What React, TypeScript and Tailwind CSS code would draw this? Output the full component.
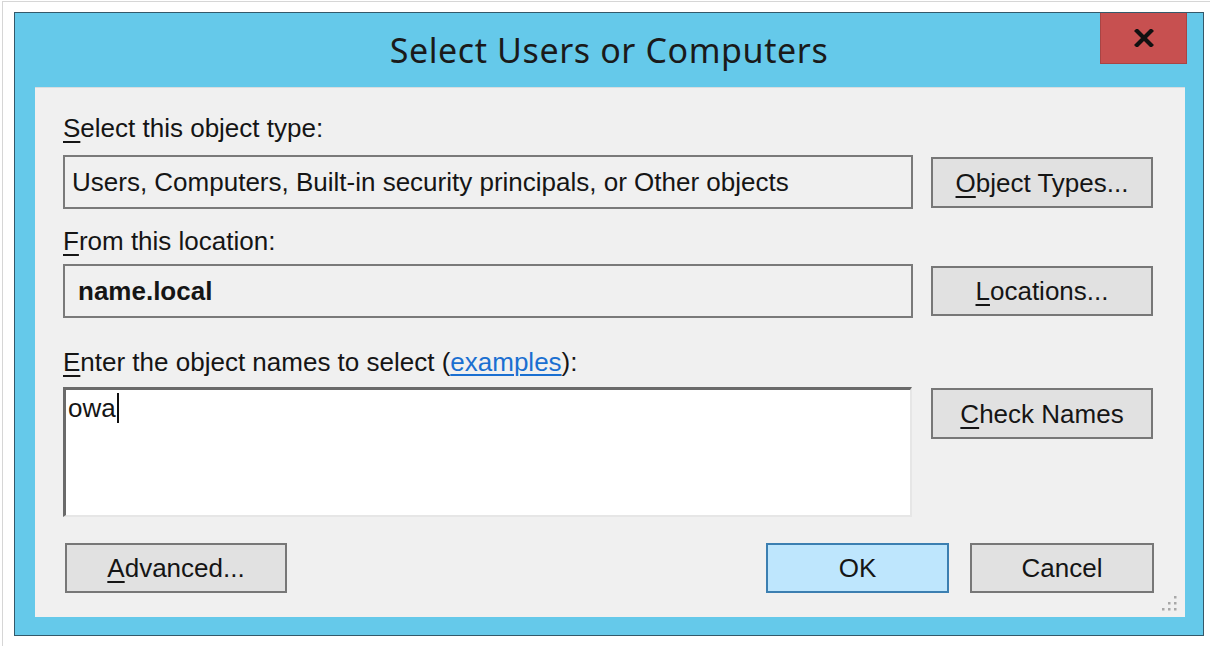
import React from 'react';

/**
 * Select Users or Computers dialog
 * Windows-style picker with a cyan frame
 */

const body = "font-['Liberation_Sans',Arial,sans-serif] text-[26px] leading-[30px] text-[#151515]";

function Key({ children }: { children: React.ReactNode }) {
  return <span className="underline decoration-[2px] underline-offset-[4px]">{children}</span>;
}

function DialogButton({
  children,
  primary = false,
  className = '',
}: {
  children: React.ReactNode;
  primary?: boolean;
  className?: string;
}) {
  return (
    <button
      type="button"
      className={`flex items-center justify-center border-2 ${
        primary ? 'bg-[#bee6fd] border-[#3c7fb1]' : 'bg-[#e1e1e1] border-[#777777]'
      } ${body} ${className}`}
    >
      {children}
    </button>
  );
}

function ResizeGrip() {
  const dots = [
    [12, 0],
    [6, 6],
    [12, 6],
    [0, 12],
    [6, 12],
    [12, 12],
  ];
  return (
    <svg width="15" height="15" viewBox="0 0 15 15" className="absolute right-[8px] bottom-[6px]">
      {dots.map(([x, y]) => (
        <rect key={`${x}-${y}`} x={x} y={y} width="2.5" height="2.5" fill="#a8a8a8" />
      ))}
    </svg>
  );
}

export default function App() {
  return (
    <div className="w-[1210px] h-[646px] bg-white pt-[1px] pl-[2px] overflow-hidden">
      <div className="h-full border-t border-l border-[#d6d6d6] pl-[11px] pt-[10px]">
        {/* window */}
        <div className="w-[1190px] h-[624px] border border-[#34596a] bg-[#65c9ea] flex flex-col">
          {/* title bar */}
          <div className="grid grid-cols-[1fr_auto_1fr] h-[74px]">
            <div />
            <div className="pt-[16px] font-['Noto_Sans','Open_Sans',sans-serif] text-[34px] leading-[42px] tracking-[0.6px] text-[#1a1a1a]">
              Select Users or Computers
            </div>
            <div className="flex justify-end pr-[16px]">
              <div className="w-[87px] h-[51px] bg-[#c75050] border border-t-0 border-[#a84444] flex items-center justify-center">
                <svg width="20" height="18" viewBox="0 0 20 18">
                  <path d="M3 2 L17 16 M17 2 L3 16" stroke="#111" strokeWidth="4.2" strokeLinecap="square" />
                </svg>
              </div>
            </div>
          </div>

          {/* client area */}
          <div className="relative ml-[20px] mr-[18px] h-[530px] bg-[#f0f0f0] border-t border-[#d8dde0] pl-[28px] pr-[31px] pt-[25px]">
            <div className={body}>
              <Key>S</Key>elect this object type:
            </div>
            <div className="flex items-start gap-[18px] mt-[12px]">
              <div className={`w-[850px] h-[54px] border-2 border-[#7a7a7a] flex items-center pl-[7px] ${body}`}>
                Users, Computers, Built-in security principals, or Other objects
              </div>
              <DialogButton className="w-[222px] h-[51px] mt-[2px]">
                <Key>O</Key>bject Types...
              </DialogButton>
            </div>

            <div className={`mt-[17px] ${body}`}>
              <Key>F</Key>rom this location:
            </div>
            <div className="flex items-start gap-[18px] mt-[8px]">
              <div className={`w-[850px] h-[54px] border-2 border-[#7a7a7a] flex items-center pl-[13px] ${body} font-bold`}>
                name.local
              </div>
              <DialogButton className="w-[222px] h-[50px] mt-[2px]">
                <Key>L</Key>ocations...
              </DialogButton>
            </div>

            <div className={`mt-[29px] ${body}`}>
              <Key>E</Key>nter the object names to select (
              <span className="text-[#1a6fd1] underline decoration-[1.5px] underline-offset-[3px]">examples</span>):
            </div>
            <div className="flex items-start gap-[19px] mt-[10px]">
              <div className="w-[849px] h-[130px] bg-white border-t-[3px] border-l-[3px] border-r-2 border-b-2 border-t-[#6a6a6a] border-l-[#6a6a6a] border-r-[#e6e6e6] border-b-[#e6e6e6] pl-[2px] pt-[3px]">
                <div className={`flex items-center ${body}`}>
                  owa
                  <span className="inline-block w-[2px] h-[30px] bg-[#111] ml-[1px]" />
                </div>
              </div>
              <DialogButton className="w-[222px] h-[51px] mt-[1px]">
                <Key>C</Key>heck Names
              </DialogButton>
            </div>

            <div className="flex items-center mt-[26px] pl-[2px]">
              <DialogButton className="w-[222px] h-[50px]">
                <Key>A</Key>dvanced...
              </DialogButton>
              <div className="flex-1" />
              <DialogButton primary className="w-[183px] h-[50px]">
                OK
              </DialogButton>
              <DialogButton className="w-[184px] h-[50px] ml-[21px]">
                Cancel
              </DialogButton>
            </div>

            <ResizeGrip />
          </div>
        </div>
      </div>
    </div>
  );
}
